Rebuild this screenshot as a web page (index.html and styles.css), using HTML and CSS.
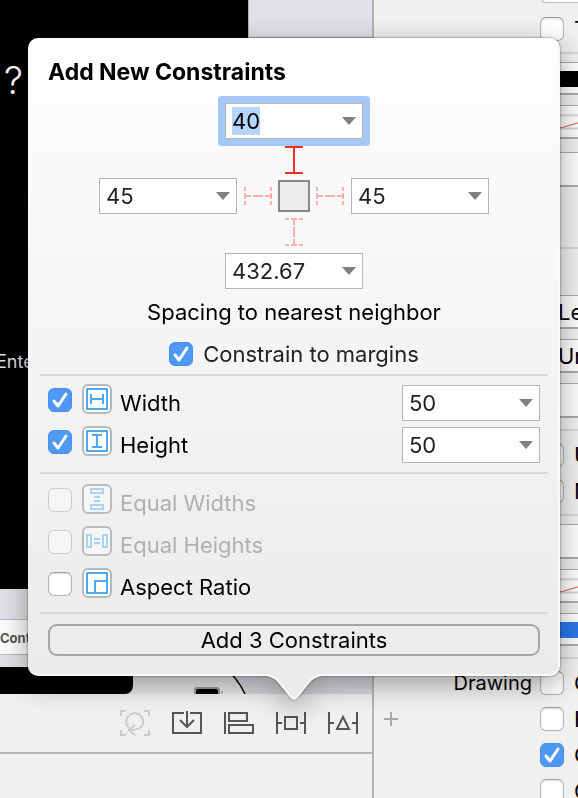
FILE: index.html
```html
<!DOCTYPE html>
<html lang="en">
<head>
<meta charset="utf-8">
<title>Add New Constraints</title>
<link rel="stylesheet" href="styles.css">
</head>
<body>
<div class="workspace">
  <main class="editor">
    <div class="canvas">
      <div class="scene">
        <div class="screen">
          <span class="screen-title">?</span>
          <span class="screen-hint">Ente</span>
        </div>
        <div class="scene-space"></div>
      </div>
      <div class="scene-bar"><span>Cont</span></div>
      <div class="next-scene">
        <div class="next-screen"></div>
        <svg class="next-frame" viewBox="0 0 115 27" aria-hidden="true">
          <path d="M0 0H88Q105 10 112 27H0Z" fill="#e6e6e6"/>
          <path d="M90 0Q104 10 112 27" fill="none" stroke="#000" stroke-width="1.500"/>
          <rect x="61" y="20" width="26" height="14" rx="3" fill="#999"/>
          <rect x="63" y="22" width="22" height="12" rx="2" fill="#000"/>
          <path d="M89 24v3" stroke="#888" stroke-width="1"/>
        </svg>
      </div>
    </div>
    <div class="toolbar">
      <button class="tool" disabled aria-label="Update Frames"><svg viewBox="0 0 30 30"><path d="M1 8V3H6M24 3H29V8M1 22V27H6M24 27H29V22M9 20A8.500 8.500 0 1 1 22 18Q19 22 10 22M15 17L9 22L15 27"/></svg></button>
      <button class="tool" aria-label="Embed In"><svg viewBox="0 0 30 30"><path d="M12 5H1V25H29V5H18M15 3V19M8 12L15 19L22 12"/></svg></button>
      <button class="tool" aria-label="Align"><svg viewBox="0 0 30 30"><path d="M1 4V26M5 5H23V13H5ZM5 17H29V25H5Z"/></svg></button>
      <button class="tool" aria-label="Add New Constraints"><svg viewBox="0 0 30 30"><path d="M1 4V26M29 4V26M1 15H6M24 15H29M9 9H21V21H9Z"/></svg></button>
      <button class="tool" aria-label="Resolve Auto Layout Issues"><svg viewBox="0 0 30 30"><path d="M1 4V26M29 4V26M1 15H6M24 15H29M15 9L21 21H9Z"/></svg></button>
    </div>
    <div class="debug"></div>
  </main>

  <aside class="inspector">
    <div class="field clipped"></div>
    <div class="option"><span class="side"></span><input type="checkbox" id="o1"><label for="o1">T</label></div>
    <hr>
    <div class="field color"><i class="ink"></i></div>
    <div class="field swatch"><svg viewBox="0 0 38 33" preserveAspectRatio="none" aria-hidden="true"><path d="M0 10H38M0 24H38" stroke="#d4d4d4" stroke-width="2"/><path d="M0 29L38 18" stroke="#e0483e" stroke-width="1"/></svg></div>
    <div class="field tall"></div>
    <hr class="far">
    <div class="field menu">Le</div>
    <div class="field menu">Un</div>
    <div class="field tall near"></div>
    <hr>
    <div class="option"><span class="side"></span><input type="checkbox" id="o2"><label for="o2">U</label></div>
    <div class="option"><span class="side"></span><input type="checkbox" id="o3"><label for="o3">M</label></div>
    <hr>
    <div class="field tall near"></div>
    <div class="field swatch"><svg viewBox="0 0 38 33" preserveAspectRatio="none" aria-hidden="true"><path d="M0 10H38M0 24H38" stroke="#d4d4d4" stroke-width="2"/><path d="M0 29L38 18" stroke="#e0483e" stroke-width="1"/></svg></div>
    <div class="field color"><i class="tint"></i></div>
    <hr>
    <div class="option"><span class="side name">Drawing</span><input type="checkbox" id="o4"><label for="o4">O</label></div>
    <div class="option"><span class="side"><button class="add" aria-label="Add variation"><svg viewBox="0 0 14 14"><path d="M7 0V14M0 7H14"/></svg></button></span><input type="checkbox" id="o5"><label for="o5">H</label></div>
    <div class="option"><span class="side"></span><input type="checkbox" id="o6" checked><label for="o6">C</label></div>
    <div class="option"><span class="side"></span><input type="checkbox" id="o7"><label for="o7">C</label></div>
  </aside>
</div>

<form class="popover" aria-labelledby="title">
  <h1 id="title">Add New Constraints</h1>
  <div class="pins">
    <div class="combo"><input id="top" type="text" value="40" aria-label="Top spacing" autofocus><button type="button" aria-label="Top spacing choices"></button></div>
    <svg class="strut upright on" viewBox="0 0 18 39" aria-hidden="true"><path d="M0 8H18M9 8V34M0 34H18"/></svg>
    <div class="pin-row">
      <div class="combo"><input type="text" value="45" aria-label="Left spacing"><button type="button" aria-label="Left spacing choices"></button></div>
      <svg class="strut" viewBox="0 0 41 18" aria-hidden="true"><path d="M8 0V4M8 6V12M8 14V18M34 0V4M34 6V12M34 14V18M9 9H14M16 9H26M28 9H33"/></svg>
      <div class="view"></div>
      <svg class="strut" viewBox="0 0 41 18" aria-hidden="true"><path d="M7 0V4M7 6V12M7 14V18M33 0V4M33 6V12M33 14V18M8 9H13M15 9H25M27 9H32"/></svg>
      <div class="combo"><input type="text" value="45" aria-label="Right spacing"><button type="button" aria-label="Right spacing choices"></button></div>
    </div>
    <svg class="strut upright" viewBox="0 0 18 39" aria-hidden="true"><path d="M0 5H4M6 5H12M14 5H18M0 31H4M6 31H12M14 31H18M9 6V11M9 13V23M9 25V30"/></svg>
    <div class="combo"><input type="text" value="432.67" aria-label="Bottom spacing"><button type="button" aria-label="Bottom spacing choices"></button></div>
  </div>
  <p class="caption">Spacing to nearest neighbor</p>
  <div class="margins"><input type="checkbox" id="margins" checked><label for="margins">Constrain to margins</label></div>

  <div class="group">
    <div class="row">
      <input type="checkbox" id="width" checked>
      <svg class="glyph" viewBox="0 0 30 30" aria-hidden="true"><rect class="tile" x="1" y="1" width="28" height="28" rx="5"/><path d="M5 5H25V25H5ZM9 10V20M21 10V20M9 15H21"/></svg>
      <label for="width">Width</label>
      <div class="combo"><input type="text" value="50" aria-label="Width value"><button type="button" aria-label="Width choices"></button></div>
    </div>
    <div class="row">
      <input type="checkbox" id="height" checked>
      <svg class="glyph" viewBox="0 0 30 30" aria-hidden="true"><rect class="tile" x="1" y="1" width="28" height="28" rx="5"/><path d="M5 5H25V25H5ZM10 9H20M10 21H20M15 9V21"/></svg>
      <label for="height">Height</label>
      <div class="combo"><input type="text" value="50" aria-label="Height value"><button type="button" aria-label="Height choices"></button></div>
    </div>
  </div>
  <div class="group relations">
    <div class="row off">
      <input type="checkbox" id="ew" disabled>
      <svg class="glyph" viewBox="0 0 30 30" aria-hidden="true"><rect class="tile" x="1" y="1" width="28" height="28" rx="5"/><path d="M9 5H21V9H9ZM9 21H21V25H9ZM12 13H18M12 17H18"/></svg>
      <label for="ew">Equal Widths</label>
    </div>
    <div class="row off">
      <input type="checkbox" id="eh" disabled>
      <svg class="glyph" viewBox="0 0 30 30" aria-hidden="true"><rect class="tile" x="1" y="1" width="28" height="28" rx="5"/><path d="M5 9H9V21H5ZM21 9H25V21H21ZM12 13H18M12 17H18"/></svg>
      <label for="eh">Equal Heights</label>
    </div>
    <div class="row">
      <input type="checkbox" id="ratio">
      <svg class="glyph" viewBox="0 0 30 30" aria-hidden="true"><rect class="tile" x="1" y="1" width="28" height="28" rx="5"/><path d="M5 5H25V25H5ZM13 25V13H25"/></svg>
      <label for="ratio">Aspect Ratio</label>
    </div>
  </div>
  <div class="group last">
    <button type="button" class="submit">Add 3 Constraints</button>
  </div>
  <svg class="tail" viewBox="0 0 56 27" aria-hidden="true"><path d="M0 0V1Q8 2 13 8L25 23Q28 27 31 23L43 8Q48 2 56 1V0Z" fill="#ebebeb"/><path d="M0 1Q8 2 13 8L25 23Q28 27 31 23L43 8Q48 2 56 1" fill="none" stroke="#fafafa" stroke-width="2"/></svg>
</form>
<script src="script.js"></script>
</body>
</html>
```
FILE: styles.css
```css
* { box-sizing: border-box; }

body {
  margin: 0;
  height: 100vh;
  overflow: hidden;
  position: relative;
  font: 22px/28px Inter, "Liberation Sans", sans-serif;
  color: #000;
  background: #f0f0f0;
}

button, input { font: inherit; color: inherit; margin: 0; padding: 0; }
button { background: none; border: 0; }

.workspace {
  display: grid;
  grid-template-columns: 1fr 206px;
  height: 100%;
  overflow: hidden;
}

/* Editor */
.editor { display: flex; flex-direction: column; min-width: 0; background: #eff0f0; }
.canvas { display: flex; flex-direction: column; flex: 1; background: #e0e1e6; }
.scene { display: grid; grid-template-columns: 2fr 1fr; flex: 1; }
.screen {
  display: flex;
  flex-direction: column;
  justify-content: space-between;
  padding: 56px 0 212px 4px;
  background: #000;
  color: #fff;
}
.screen-title { font-size: 38px; line-height: 48px; font-weight: 300; }
.screen-hint { font-size: 18px; line-height: 30px; margin-left: -8px; color: #ddd; }
.scene-space { border-left: 1px solid #b4b0ac; height: 38px; border-bottom: 1px solid #aaa; }
.scene-bar {
  margin: 30px 0 12px;
  padding-top: 4px;
  height: 36px;
  font-size: 13px;
  font-weight: 700;
  color: #555;
  background: #fbfbfb;
  border: solid #b9babd;
  border-width: 1px 0;
}
.next-scene { display: flex; height: 27px; background: linear-gradient(90deg, #e6e6e6 200px, #d5d6dc 200px); }
.next-screen { width: 133px; background: #000; border-radius: 0 0 8px 0; }
.next-frame { width: 115px; height: 27px; }

.toolbar {
  display: flex;
  align-items: center;
  justify-content: flex-end;
  gap: 22px;
  height: 60px;
  padding-right: 14px;
  border-bottom: 2px solid #b2b3b2;
}
.tool { width: 30px; height: 30px; }
.tool svg { display: block; fill: none; stroke: #555; stroke-width: 2; }
.tool:disabled svg { stroke: #ccc; }
.debug { height: 44px; }

/* Inspector */
.inspector {
  border-left: 2px solid #b2b2b2;
  background: #f0f0f0;
  overflow: hidden;
  white-space: nowrap;
}
.inspector hr { margin: 11px 0 8px; border: 0; height: 2px; background: #d6d6d6; }
.inspector hr.far { margin: 60px 0 46px; }
.option { display: flex; align-items: center; height: 24px; margin-top: 12px; }
.side { flex: none; width: 166px; padding: 0 8px 0 10px; }
.side.name { text-align: right; font-size: 20px; }
.option label { padding-left: 10px; }
.add { display: block; width: 14px; height: 14px; }
.add svg { display: block; stroke: #a9a9a9; stroke-width: 2; }
.field { height: 34px; margin: 10px 0 0 168px; background: #fdfdfd; border: solid #aaa; border-width: 1px 0 2px; }
.field.clipped { height: 3px; margin-top: 0; border: solid #bbb; border-width: 0 0 1px 1px; border-radius: 0 0 0 6px; }
.field.clipped + .option { margin-top: 14px; }
.field.tall { height: 35px; margin-top: 13px; }
.field.near { margin-top: 10px; }
.field.menu { padding-left: 16px; line-height: 32px; }
.field.color { height: 33px; padding: 8px 0; }
.inspector hr + .field { margin-top: 8px; }
.field svg { display: block; width: 100%; height: 31px; }
.field.color i { display: block; height: 16px; }
.ink { background: #000; }
.tint { background: #2a78ec; }

/* Checkboxes */
input[type="checkbox"] {
  appearance: none;
  flex: none;
  width: 24px;
  height: 24px;
  background: #fff;
  border: 1px solid #b4b4b4;
  border-top-color: #9a9a9a;
  border-radius: 6px;
  box-shadow: inset 0 1px 2px #ddd;
}
input[type="checkbox"]:checked {
  background: #4f99f5 url("data:image/svg+xml,%3Csvg xmlns='http://www.w3.org/2000/svg' viewBox='0 0 24 24'%3E%3Cpath d='M6 13L10 18L18 6' fill='none' stroke='white' stroke-width='3' stroke-linecap='round' stroke-linejoin='round'/%3E%3C/svg%3E") center / 24px 24px;
  border-color: #4790ef;
  box-shadow: none;
}
input[type="checkbox"]:disabled { background: #f6f6f6; border-color: #cbcbcb; box-shadow: none; }

/* Popover */
.popover {
  position: absolute;
  top: 38px;
  left: 28px;
  right: 18px;
  padding: 20px 10px 18px 12px;
  border-radius: 10px;
  border: solid #fafafa;
  border-width: 0 2px 2px 0;
  background: linear-gradient(#fefefe, #ebebeb);
  filter: drop-shadow(0 0 1px rgba(0, 0, 0, .5)) drop-shadow(0 8px 14px rgba(0, 0, 0, .35));
}
.popover h1 { margin: 0 0 17px 8px; font-size: 23px; line-height: 28px; font-weight: 700; }
.pins { display: flex; flex-direction: column; align-items: center; }
.pin-row { display: flex; align-items: center; }
.combo {
  display: flex;
  align-items: center;
  width: 138px;
  height: 36px;
  background: #fff;
  border: 1px solid #b5b5b5;
  color: #222;
}
.combo:focus-within { box-shadow: 0 0 0 7px #a5c9f7; border-radius: 1px; color: #000; }
.combo input { flex: 1; min-width: 0; height: 28px; line-height: 28px; padding-left: 6px; border: 0; outline: 0; background: none; }
.combo input::selection { background: #b5d5fd; color: #000; }
.combo button {
  width: 14px;
  height: 8px;
  margin-right: 6px;
  background: #808080;
  clip-path: polygon(0 0, 100% 0, 50% 100%);
}
.strut { display: block; width: 41px; height: 18px; fill: none; stroke: #f8b1ae; stroke-width: 2; }
.strut.upright { width: 18px; height: 39px; }
.strut.on { stroke: #ee3124; }
.view { width: 32px; height: 32px; background: #ececec; border: 2px solid #888; }
.caption { margin: 9px 0 14px; text-align: center; }
.margins { display: flex; align-items: center; justify-content: center; gap: 10px; color: #222; margin-bottom: 6px; }
.group { border-top: 2px solid #d8d8d8; padding: 9px 8px; display: flex; flex-direction: column; gap: 6px; }
.group.relations { padding: 11px 8px 7px; }
.row { display: flex; align-items: center; height: 36px; }
.row input[type="checkbox"] { margin-bottom: 6px; }
.glyph { width: 30px; height: 30px; margin: 0 8px 8px 10px; fill: none; stroke: #4eaaf0; stroke-width: 2; }
.glyph .tile { fill: #fff; stroke: #b8b8b8; }
.row label { flex: 1; }
.off { color: #b0b0b0; }
.off .glyph { stroke: #a9d4f1; }
.off .glyph .tile { fill: #f5f7f7; stroke: #bcbcbc; }
.group.last { padding: 10px 8px 0; }
.submit { height: 32px; border: 2px solid #a5a5a5; border-radius: 9px; line-height: 28px; }
.tail { position: absolute; top: 100%; left: calc(50% - 27px); width: 56px; height: 27px; }
```
FILE: script.js
```js
const first = document.getElementById("top");
first.focus();
first.select();
```
